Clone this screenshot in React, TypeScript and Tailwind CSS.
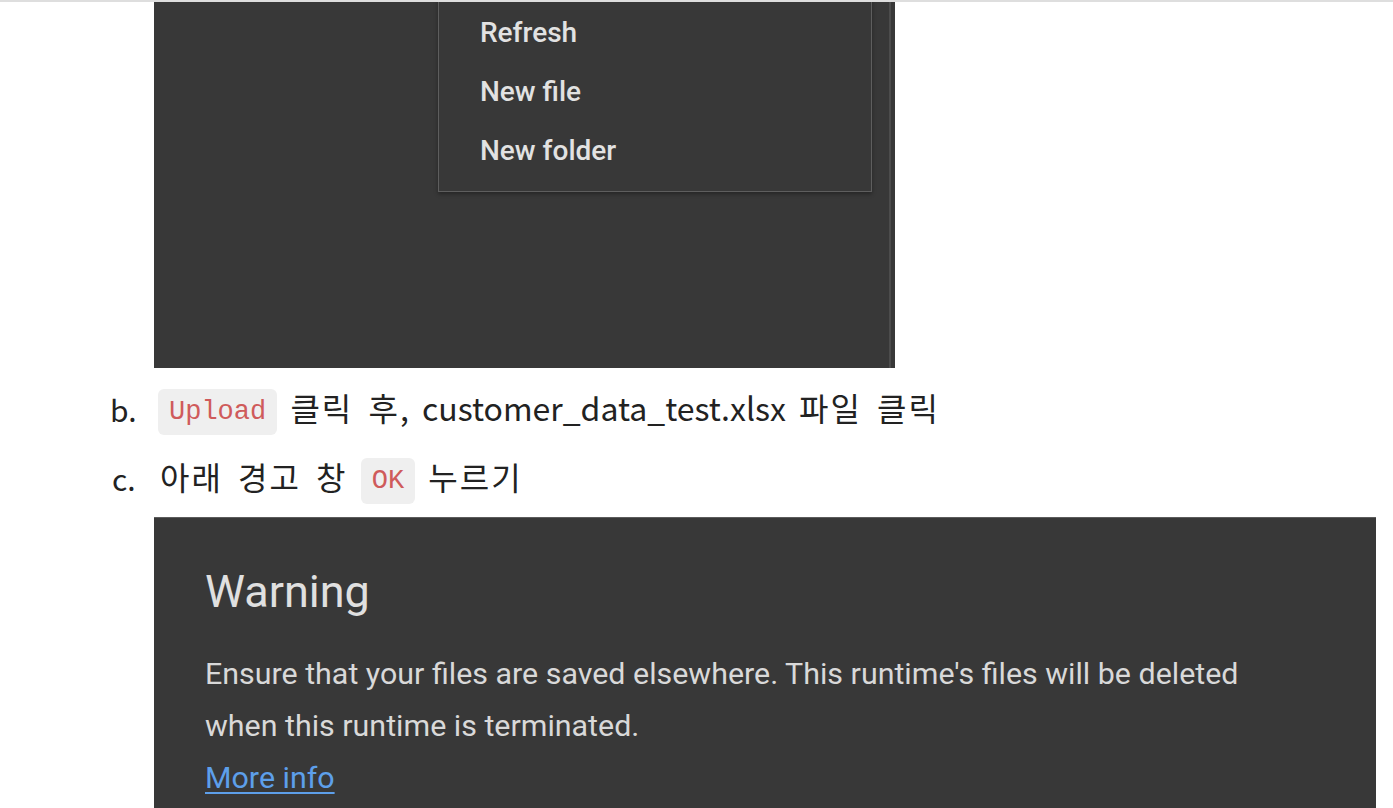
const menuItems = ["Refresh", "New file", "New folder"];

function Chip({ children }: { children: string }) {
  return (
    <code className="inline-flex h-[46px] items-center rounded-md bg-[#efefef] px-[11px] align-middle font-['Liberation_Mono',monospace] text-[27px] tracking-normal text-[#cf5b5b] [word-spacing:0]">
      {children}
    </code>
  );
}

// hangul runs get a little extra tracking so they sit wider next to latin text
function Ko({ children }: { children: string }) {
  return <span className="tracking-[2px]">{children}</span>;
}

function FilesMenuShot() {
  return (
    <div className="relative ml-[154px] h-[366px] w-[741px] overflow-hidden bg-[#383838]">
      <div className="absolute left-[284px] top-[-20px] flex h-[210px] w-[434px] flex-col border border-[#5e5e5e] bg-[#383838] pt-[20px] pl-[41px] shadow-[0_2px_4px_rgba(0,0,0,0.35)]">
        {menuItems.map((item) => (
          <div key={item} className="flex h-[59px] items-center font-['Roboto',sans-serif] text-[28px] font-medium text-[#e2e2e2]">
            {item}
          </div>
        ))}
      </div>
      <div className="absolute right-[4px] top-0 h-full w-[2px] bg-[#4c4c4c]" />
    </div>
  );
}

function WarningShot() {
  return (
    <div className="ml-[154px] mt-[16px] w-[1222px] border-t border-[#5c5c5c] bg-[#383838] pl-[51px] pt-[50px] pb-[20px] font-['Roboto',sans-serif]">
      <div className="text-[45px] leading-[48px] text-[#e0e0e0]">Warning</div>
      <div className="mt-[32px] text-[30.4px] leading-[52px] text-[#d9d9d9]">
        <div>Ensure that your files are saved elsewhere. This runtime's files will be deleted</div>
        <div>when this runtime is terminated.</div>
        <a className="text-[#5d9fea] underline decoration-2 underline-offset-4">More info</a>
      </div>
    </div>
  );
}

export default function App() {
  return (
    <div className="min-h-screen overflow-hidden border-t-2 border-[#dedede] bg-white font-['Noto_Sans_CJK_KR',sans-serif] text-[32px] text-[#222]">
      <FilesMenuShot />

      <div className="mt-[18px] flex h-[46px] items-center">
        <span className="box-content w-[48px] pl-[110px] text-[30px]">b.</span>
        <span className="whitespace-nowrap [word-spacing:6px]">
          <Chip>Upload</Chip> <Ko>클릭 후</Ko>, customer_data_test.xlsx <Ko>파일 클릭</Ko>
        </span>
      </div>

      <div className="mt-[23px] flex h-[46px] items-center">
        <span className="box-content w-[48px] pl-[112px] text-[30px]">c.</span>
        <span className="whitespace-nowrap [word-spacing:6px]">
          <Ko>아래 경고 창</Ko> <Chip>OK</Chip> <Ko>누르기</Ko>
        </span>
      </div>

      <WarningShot />
    </div>
  );
}
